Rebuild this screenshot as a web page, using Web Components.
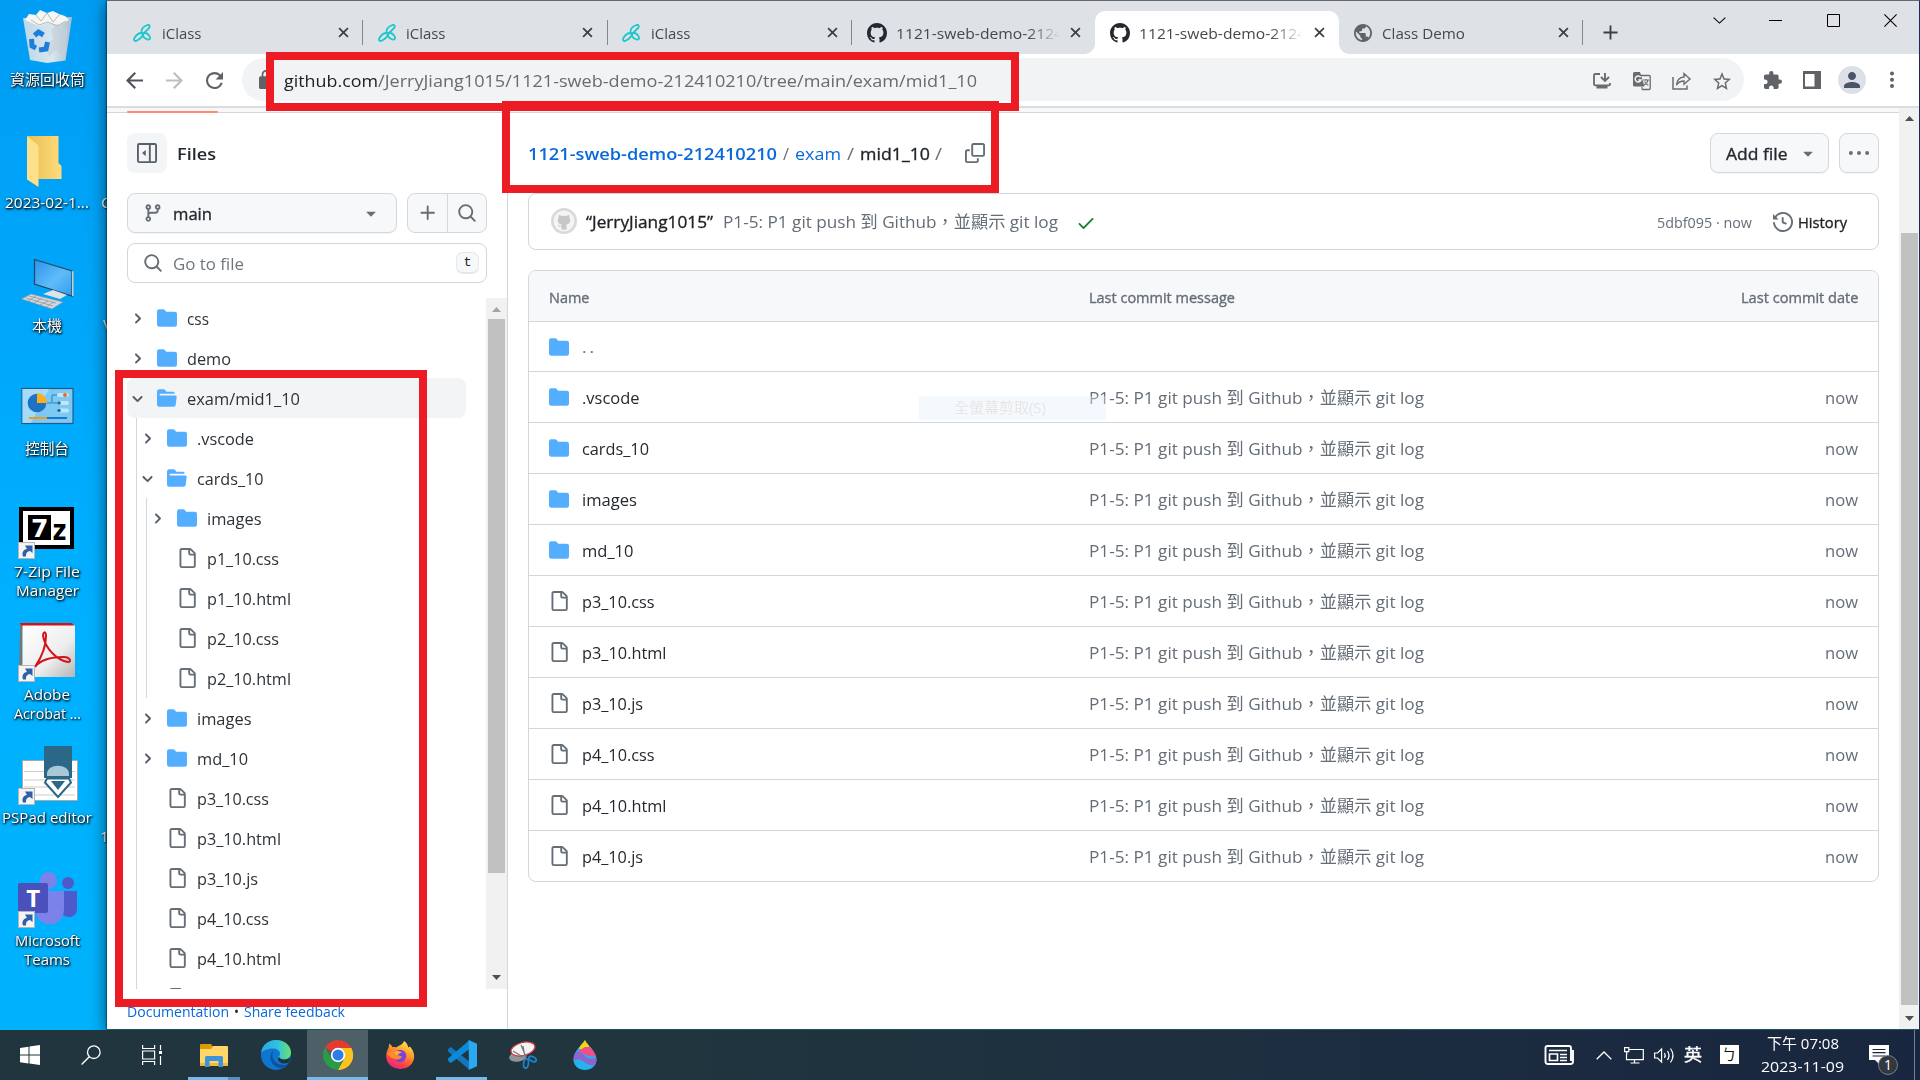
<!DOCTYPE html>
<html lang="zh-Hant">
<head>
<meta charset="utf-8">
<title>Desktop</title>
<style>
html,body{margin:0;padding:0}
body{width:1920px;height:1080px;overflow:hidden;font-family:"Open Sans","Noto Sans CJK TC",sans-serif;font-size:17px;color:#1f2328}
</style>
</head>
<body>
<desk-shell></desk-shell>
<script>
const def=(tag,render,after)=>customElements.define(tag,class extends HTMLElement{
  connectedCallback(){
    if(this.shadowRoot)return;
    const r=this.attachShadow({mode:'open'});
    r.innerHTML='<style>*{box-sizing:border-box}</style>'+render((n,d='')=>this.getAttribute(n)??d,this);
    if(after)after(this,r);
  }
});

const gh='M8 0c4.42 0 8 3.58 8 8a8.013 8.013 0 0 1-5.45 7.59c-.4.08-.55-.17-.55-.38 0-.27.01-1.13.01-2.2 0-.75-.25-1.23-.54-1.48 1.78-.2 3.65-.88 3.65-3.95 0-.88-.31-1.59-.82-2.15.08-.2.36-1.02-.08-2.12 0 0-.67-.22-2.2.82-.64-.18-1.32-.27-2-.27-.68 0-1.36.09-2 .27-1.53-1.03-2.2-.82-2.2-.82-.44 1.1-.16 1.92-.08 2.12-.51.56-.82 1.28-.82 2.15 0 3.06 1.86 3.75 3.64 3.95-.23.2-.44.55-.51 1.07-.46.21-1.61.55-2.33-.66-.15-.24-.6-.83-1.23-.82-.67.01-.27.38.01.53.34.19.73.9.82 1.13.16.45.68 1.31 2.69.94 0 .67.01 1.3.01 1.49 0 .21-.15.45-.55.38A7.995 7.995 0 0 1 0 8c0-4.42 3.58-8 8-8Z';
const p=d=>`<path d="${d}"/>`;
const st='fill="none" stroke="currentColor"';
const link=(x,y)=>`<g transform="translate(${x} ${y})"><rect x=".5" y=".5" width="16" height="16" fill="#f4f4f4" stroke="#b5b5b5"/><path d="M5 14.500c-1.500-4 .5-7 4-7.500l-2-3.500h7.500v7.500L12 9c-3.500.5-4 2.500-4 5.500z" fill="#2e5fa8"/></g>`;
/* name: [viewBox, markup] */
const ICONS={
 github:['0 0 16 16',p(gh)],
 folder:['0 0 16 16',p('M1.75 1A1.75 1.75 0 0 0 0 2.750v10.500C0 14.216.784 15 1.750 15h12.500A1.750 1.750 0 0 0 16 13.250v-8.500A1.750 1.750 0 0 0 14.250 3H7.500a.25.25 0 0 1-.2-.1l-.9-1.200C6.070 1.260 5.550 1 5 1H1.750Z')],
 folderopen:['0 0 16 16',p('M.513 1.513A1.75 1.75 0 0 1 1.75 1h3.500c.55 0 1.070.26 1.400.7l.9 1.200a.25.25 0 0 0 .2.1H13a1 1 0 0 1 1 1v.5H2.750a.75.75 0 0 0 0 1.500h11.978a1 1 0 0 1 .994 1.117L15 13.250A1.750 1.750 0 0 1 13.250 15H1.750A1.750 1.750 0 0 1 0 13.250V2.750c0-.464.184-.91.513-1.237Z')],
 file:['0 0 16 16',p('M2 1.75C2 .784 2.784 0 3.75 0h6.586c.464 0 .909.184 1.237.513l2.914 2.914c.329.328.513.773.513 1.237v9.586A1.75 1.75 0 0 1 13.25 16h-9.500A1.750 1.750 0 0 1 2 14.250Zm1.750-.25a.25.25 0 0 0-.25.25v12.500c0 .138.112.25.25.25h9.500a.25.25 0 0 0 .25-.25V6h-2.750A1.750 1.750 0 0 1 9 4.250V1.500Zm6.750.062V4.250c0 .138.112.25.25.25h2.688l-.011-.013-2.914-2.914-.013-.011Z')],
 branch:['0 0 16 16',p('M9.5 3.25a2.25 2.25 0 1 1 3 2.122V6A2.5 2.5 0 0 1 10 8.500H6a1 1 0 0 0-1 1v1.128a2.251 2.251 0 1 1-1.500 0V5.372a2.250 2.250 0 1 1 1.500 0v1.836A2.493 2.493 0 0 1 6 7h4a1 1 0 0 0 1-1v-.628A2.250 2.250 0 0 1 9.500 3.250Zm-6 0a.75.75 0 1 0 1.500 0 .75.75 0 0 0-1.500 0Zm8.250-.75a.75.75 0 1 0 0 1.500.75.75 0 0 0 0-1.500ZM4.250 12a.75.75 0 1 0 0 1.500.75.75 0 0 0 0-1.500Z')],
 caret:['0 0 16 16',p('m4.427 7.427 3.396 3.396a.25.25 0 0 0 .354 0l3.396-3.396A.25.25 0 0 0 11.396 7H4.604a.25.25 0 0 0-.177.427Z')],
 plus:['0 0 16 16',p('M7.75 2a.75.75 0 0 1 .75.75V7h4.250a.75.75 0 0 1 0 1.500H8.500v4.250a.75.75 0 0 1-1.500 0V8.500H2.750a.75.75 0 0 1 0-1.500H7V2.750A.75.75 0 0 1 7.750 2Z')],
 search:['0 0 16 16',p('M10.68 11.74a6 6 0 0 1-7.922-8.982 6 6 0 0 1 8.982 7.922l3.040 3.040a.749.749 0 0 1-.326 1.275.749.749 0 0 1-.734-.215ZM11.500 7a4.499 4.499 0 1 0-8.997 0A4.499 4.499 0 0 0 11.500 7Z')],
 right:['0 0 12 12',p('M4.7 10c-.2 0-.4-.1-.5-.2-.3-.3-.3-.8 0-1.100L6.900 6 4.200 3.300c-.3-.3-.3-.8 0-1.100.3-.3.8-.3 1.100 0l3.300 3.200c.3.3.3.8 0 1.100L5.300 9.700c-.2.2-.4.3-.6.3Z')],
 down:['0 0 12 12',p('M6 8.825c-.2 0-.4-.1-.5-.2l-3.300-3.300c-.3-.3-.3-.8 0-1.100.3-.3.8-.3 1.100 0l2.700 2.700 2.700-2.700c.3-.3.8-.3 1.100 0 .3.3.3.8 0 1.100l-3.200 3.200c-.2.2-.4.3-.6.3Z')],
 panel:['0 0 16 16',`<rect x=".75" y=".75" width="14.500" height="14.500" rx="1" ${st} stroke-width="1.500"/><path d="M10.250 1v14" ${st} stroke-width="1.500"/><path d="M7 5.500v5L4.300 8.200a.25.25 0 0 1 0-.4z"/>`],
 copy:['0 0 16 16',p('M0 6.75C0 5.784.784 5 1.75 5h1.500a.75.75 0 0 1 0 1.500h-1.500a.25.25 0 0 0-.25.25v7.500c0 .138.112.25.25.25h7.500a.25.25 0 0 0 .25-.25v-1.500a.75.75 0 0 1 1.500 0v1.500A1.750 1.750 0 0 1 9.250 16h-7.500A1.750 1.750 0 0 1 0 14.250Z')+p('M5 1.75C5 .784 5.784 0 6.75 0h7.500C15.216 0 16 .784 16 1.750v7.500A1.750 1.750 0 0 1 14.250 11h-7.500A1.750 1.750 0 0 1 5 9.250Zm1.750-.25a.25.25 0 0 0-.25.25v7.500c0 .138.112.25.25.25h7.500a.25.25 0 0 0 .25-.25v-7.500a.25.25 0 0 0-.25-.25Z')],
 check:['0 0 16 16',p('M13.78 4.22a.75.75 0 0 1 0 1.060l-7.250 7.250a.75.75 0 0 1-1.060 0L2.220 9.280a.751.751 0 0 1 .018-1.042.751.751 0 0 1 1.042-.018L6 10.940l6.720-6.720a.75.75 0 0 1 1.060 0Z')],
 history:['0 0 16 16',p('m.427 1.927 1.215 1.215a8.002 8.002 0 1 1-1.600 5.685.75.75 0 1 1 1.493-.154 6.500 6.500 0 1 0 1.180-4.458l1.358 1.358A.25.25 0 0 1 3.896 6H.25A.25.25 0 0 1 0 5.750V2.104a.25.25 0 0 1 .427-.177ZM7.750 4a.75.75 0 0 1 .75.75v2.992l2.028.812a.75.75 0 0 1-.557 1.392l-2.500-1A.751.751 0 0 1 7 8.250v-3.500A.75.75 0 0 1 7.750 4Z')],
 dots:['0 0 16 16','<circle cx="1.500" cy="8" r="1.550"/><circle cx="8" cy="8" r="1.550"/><circle cx="14.500" cy="8" r="1.550"/>'],
 vdots:['0 0 6 18','<circle cx="3" cy="2.500" r="2"/><circle cx="3" cy="8.700" r="2"/><circle cx="3" cy="15" r="2"/>'],
 back:['4 4 16 16',p('M20 11H7.830l5.590-5.590L12 4l-8 8 8 8 1.410-1.410L7.830 13H20v-2z')],
 fwd:['4 4 16 16',p('M4 13h12.170l-5.590 5.590L12 20l8-8-8-8-1.410 1.410L16.170 11H4z')],
 reload:['4 4 16 16',p('M17.65 6.35A7.958 7.958 0 0 0 12 4c-4.420 0-7.990 3.580-7.990 8s3.570 8 7.990 8c3.730 0 6.840-2.550 7.730-6h-2.080A5.990 5.990 0 0 1 12 18c-3.310 0-6-2.690-6-6s2.690-6 6-6c1.660 0 3.140.69 4.220 1.780L13 11h7V4l-2.350 2.350z')],
 lock:['4 1 16 21',p('M18 8h-1V6c0-2.760-2.240-5-5-5S7 3.240 7 6v2H6c-1.100 0-2 .9-2 2v10c0 1.100.9 2 2 2h12c1.100 0 2-.9 2-2V10c0-1.100-.9-2-2-2zm-3 0H9V6c0-1.710 1.290-3.100 3-3.100 1.710 0 3.100 1.390 3.100 3.100v2z')],
 globe:['2 2 20 20',p('M12 2C6.48 2 2 6.48 2 12s4.480 10 10 10 10-4.480 10-10S17.520 2 12 2zm-1 17.930c-3.950-.49-7-3.850-7-7.930 0-.62.08-1.210.21-1.790L9 15v1c0 1.100.9 2 2 2v1.930zm6.900-2.540c-.26-.81-1-1.390-1.900-1.390h-1v-3c0-.55-.45-1-1-1H8v-2h2c.55 0 1-.45 1-1V7h2c1.100 0 2-.9 2-2v-.41c2.930 1.190 5 4.060 5 7.410 0 2.080-.8 3.970-2.100 5.390z')],
 star:['2 2 20 19',p('M22 9.24l-7.190-.62L12 2 9.190 8.630 2 9.240l5.460 4.730L5.820 21 12 17.270 18.180 21l-1.630-7.030L22 9.240zM12 15.400l-3.760 2.270 1-4.280-3.320-2.880 4.380-.38L12 6.100l1.710 4.040 4.380.38-3.320 2.880 1 4.280L12 15.400z')],
 puzzle:['2 1 21 21',p('M20.500 11H19V7c0-1.100-.9-2-2-2h-4V3.500a2.500 2.500 0 0 0-5 0V5H4c-1.100 0-1.990.9-1.990 2v3.800H3.500c1.490 0 2.700 1.210 2.700 2.700s-1.210 2.700-2.700 2.700H2V20c0 1.100.9 2 2 2h3.800v-1.500c0-1.490 1.210-2.700 2.700-2.700s2.700 1.210 2.700 2.700V22H17c1.100 0 2-.9 2-2v-4h1.500a2.500 2.500 0 0 0 0-5z')],
 person:['4 4 16 16',p('M12 12c2.210 0 4-1.790 4-4s-1.790-4-4-4-4 1.790-4 4 1.790 4 4 4zm0 2c-2.670 0-8 1.340-8 4v2h16v-2c0-2.660-5.330-4-8-4z')],
 side:['0 0 18 18','<path fill-rule="evenodd" d="M0 0h18v18H0zM2 3v12.500h9.500V3z"/>'],
 install:['0 0 18 18',`<path d="M7 2H2.200Q1 2 1 3.200V12q0 1.300 1.200 1.300H16q1 0 1-1.300V11" ${st} stroke-width="1.800"/><path d="M3.500 14h11v2.500h-11z"/><path d="M12 1v7.500M8 5l4 4 4-4" ${st} stroke-width="1.900"/>`],
 translate:['0 0 18 18',`<path d="M7 3.500h9.200q1 0 1 1v12q0 1-1 1H9" ${st} stroke-width="1.300"/><path d="M1.500 0H7l4.500 14.500h-10Q0 14.500 0 13V1.500Q0 0 1.500 0z"/><path d="M7.600 5.200A3 3 0 1 0 8 8H5.300" fill="none" stroke="#f1f3f4" stroke-width="1.500"/><path d="M10 8h6M13 7v1.200M15 8c-.5 2.500-2 4-4 5M11.500 9.500c.7 1.700 2 3 3.800 3.800M9 17.500v-2.500" ${st} stroke-width="1.100"/>`],
 share:['0 0 19 18',`<path d="M1 5v12h14v-3.500" ${st} stroke-width="1.500"/><path d="M4.500 13c.5-5 3-7.700 7.500-8V1.500L18 7l-6 5.300V9c-3.500 0-5.700 1.200-7.500 4z" ${st} stroke-width="1.400"/>`],
 x:['0 0 12 12',`<path d="M1.200 1.200l9.600 9.600M10.800 1.200l-9.600 9.600" ${st} stroke-width="1.900"/>`],
 newtab:['0 0 16 16',`<path d="M8 .5v15M.5 8h15" ${st} stroke-width="2"/>`],
 iclass:['0 0 18 18','<g fill="none" stroke="#1cc8cb" stroke-width="1.800"><path d="M8.500 8.800C8 5 10 2.500 14.500 1c2.500-.5 2.700 1.500 1.500 3.200L10 10z"/><path d="M8.800 9c-3 0-6 2.500-7.600 5.500-.8 1.800.6 3 2.300 2.200C7 15 9.500 13 10 10z"/><path d="M10 9.300c3-1 5.500.5 7 4 .6 1.600-.7 2.700-2.300 2.200C11.500 14.500 9.500 12.500 10 9.300z"/></g>'],
 wchev:['0 0 14 8',`<path d="M.7.7L7 7 13.300.7" ${st} stroke-width="1.100"/>`],
 wmin:['0 0 13 13',`<path d="M0 6.500h13" ${st}/>`],
 wmax:['0 0 13 13',`<path d="M.5.5h12v12H.5z" ${st}/>`],
 wclose:['0 0 13 13',`<path d="M.4.4l12.200 12.200M12.600.4L.4 12.600" ${st} stroke-width="1.100"/>`],
 tri:['0 0 9 5','<path d="M0 5L4.500 0 9 5z"/>'],
 trid:['0 0 9 5','<path d="M0 0l4.500 5L9 0z"/>'],
 avatar:['0 0 26 26',`<circle cx="13" cy="13" r="13" fill="#d9d9d9"/><circle cx="13" cy="13" r="10.500" fill="#f4f4f4"/><path transform="translate(3.600 4.200) scale(1.180)" fill="#c7c7c7" d="M8 14.800c-1 0-2-.2-2.200-.4v-2c-2 .4-2.400-1-3-1.500-.5-.4.500-.6 1.200.2.500.8 1.200.9 1.800.6.1-.5.3-.8.6-1C4 10.300 2.700 9 2.700 6.800c0-.9.3-1.600.8-2.200-.2-.7-.1-1.500.1-2.200.8 0 1.500.4 2.200.9a8 8 0 0 1 4.400 0c.7-.5 1.400-.9 2.200-.9.2.7.3 1.500.1 2.200.5.600.8 1.300.8 2.200 0 2.200-1.300 3.500-3.700 3.900.4.4.6.9.6 1.500v2.200c-.5.3-1.200.4-2.200.4z"/>`],
 start:['0 0 20 20','<path d="M0 2.900l8.500-1.200v7.900H0zM9.500 1.500L20 0v9.600H9.500zM0 10.600h8.500v7.800L0 17.200zM9.500 10.600H20V20L9.500 18.600z"/>'],
 wsearch:['0 0 20 20',`<circle cx="12.800" cy="7.200" r="6.300" ${st} stroke-width="1.300"/><path d="M8.300 11.700L.6 19.400" ${st} stroke-width="1.400"/>`],
 taskview:['0 0 20 20',`<path d="M.6 0v3.500h12V0M.6 20v-3.500h12V20M.6 6h12v8H.6zM18.500 0v5M18.500 11v9" ${st} stroke-width="1.200"/><path d="M17 6h3v3h-3z"/>`],
 explorer:['0 0 28 24','<path d="M0 2Q0 1 1 1h10l2 3v4H0z" fill="#dd9a06"/><path d="M13 3h14q1 0 1 1v19H0V6h11z" fill="#ffd667"/><path d="M0 20h28v3H0z" fill="#f0b938"/><path d="M5 24V14.500Q5 13 6.500 13h15q1.500 0 1.500 1.500V24h-4.500v-6h-9v6z" fill="#3d92dc"/>'],
 edge:['0 0 30 30','<defs><linearGradient id="a" x1="0" x2="1"><stop offset="0" stop-color="#2aa6e8"/><stop offset=".55" stop-color="#32c2dc"/><stop offset="1" stop-color="#6be36b"/></linearGradient></defs><circle cx="15" cy="15" r="15" fill="#0f76cf"/><path d="M0 13C1 5 7.500 0 15 0c9 0 15 6 15 12.500 0 4.500-3.500 7-7.500 7-3 0-5-1-5-2 0-1 1.500-1.500 1.500-4C19 10.500 15.500 8.500 11.500 8.500 6 8.500 1.500 11 0 13z" fill="url(#a)"/><path d="M13 10c-5 3.500-5 13 2.500 17 4.500 2.300 9 1 12-3C23 26 13.500 25 11.500 17 11 14 11.500 12 13 10z" fill="#114fa3"/><path d="M18.500 17c0 1.500 2 2.600 5 2.600 2.500 0 4.500-.8 6-2.500-.3 2-.8 3.800-1.800 5.400-4 2.500-10 .5-11-3.500z" fill="#20333d"/>'],
 chrome:['0 0 30 30','<path d="M15 15L2 7.500A15 15 0 0 1 28 7.500L28 8H15z" fill="#e33b2e"/><path d="M15 15h13.200L28 7.500A15 15 0 0 1 15 30L21.500 18.500z" fill="#fcc31e"/><path d="M2 7.500L8.500 18.700 15 22.500 19.500 21 14.500 30A15 15 0 0 1 2 7.500z" fill="#2a9c47"/><path d="M15 8h13.100A15 15 0 0 1 30 15q0 8-6 12l-8.500 3 6-11.200z" fill="#fcc31e"/><circle cx="15" cy="15" r="7.200" fill="#fff"/><circle cx="15" cy="15" r="5.500" fill="#2b7de9"/>'],
 firefox:['0 0 28 28','<defs><linearGradient id="a" x1=".8" y1="0" x2=".3" y2="1"><stop offset="0" stop-color="#fff04a"/><stop offset=".4" stop-color="#ff9a2a"/><stop offset=".75" stop-color="#ff4340"/><stop offset="1" stop-color="#e52195"/></linearGradient></defs><path d="M18 0c3 2 4 4.500 4.200 6.500L24 5.500C29 11 29.500 18 25.500 23 20 29.500 8.500 29.500 3 23-.5 19-.8 12 2.500 7l.8-4.500C5 4 6 5 6.500 6.300 8 6 9 6 10 6.500L12.500 5c2-.8 4.500-2 5.500-5z" fill="url(#a)"/><circle cx="14" cy="15" r="6.200" fill="#7d42d8"/><path d="M8 11c3-1.500 5-1 8 .5-3 .5-4 1.500-4.500 3.500C10 14.500 8 13 8 11z" fill="#ffb02e"/><path d="M1 13c2-3 5-4 7-2 0 2.500 2 4 5 3.500l3 1c-1 2.500-5 4-8 2-1 0-4-1-7-4.500z" fill="#ff8b2c"/>'],
 vscode:['0 0 30 30','<path d="M1.500 8.500L3.800 7 23 22v7.500L21.500 29 .7 11.200z" fill="#1377bd"/><path d="M.7 18.800l1 2.900L4 23 23 8.500V.5L21.500 1 .7 18.800z" fill="#0a8ad8"/><path d="M21.500 0L30 3.800v22.400L21.500 30 22 28z" fill="#2aa9f2"/>'],
 snip:['0 0 28 28','<ellipse cx="9" cy="15.500" rx="9" ry="5" fill="#8f9599" transform="rotate(-12 9 15.500)"/><ellipse cx="14" cy="8" rx="12.300" ry="6.500" transform="rotate(-15 14 8)" fill="#f4f4f4" stroke="#d33a3a" stroke-width="1.200"/><path d="M12 4l5 12M4 10l10 6M16 16L14 5" stroke="#777" stroke-width="1.200" fill="none"/><g fill="none" stroke="#1c86d1" stroke-width="1.700"><ellipse cx="17" cy="22.500" rx="2.400" ry="4.600" transform="rotate(8 17 22.500)"/><ellipse cx="23.500" cy="18" rx="4" ry="2.200" transform="rotate(25 23.500 18)"/></g>'],
 drop:['0 0 24 30','<defs><clipPath id="c"><path d="M12 0c1 4 11.500 11 11.500 19.500C23.500 26 18 30 12 30S.5 26 .5 19.500C.5 11 9 5 12 0z"/></clipPath></defs><g clip-path="url(#c)"><path d="M0 0h24v30H0z" fill="#23b4ee"/><path d="M8 0h8v9H6z" fill="#f8d210"/><path d="M24 7L12 7 2 13c7-4 10 6 22 3z" fill="#ee4f86"/><path d="M0 14c5-4 8-2 12 2s8 3 12 1v8c-5 1-9 0-13-3-4-3-7-3-11-1z" fill="#8f63cf"/></g>'],
 news:['0 0 30 20',`<path d="M1.500 3Q1.500 1 3.500 1H25q2 0 2 2v3h2v10.500q0 2.500-2.500 2.500H4q-2.500 0-2.500-2.500zM27 6v10" ${st} stroke-width="1.900"/><path d="M5 5.500h18M5.500 9h8v6.500h-8zM16 9.500h7M16 12.500h7M16 15.500h7" ${st} stroke-width="1.700"/>`],
 tchev:['0 0 16 9',`<path d="M.7 8.300L8 1l7.300 7.300" ${st} stroke-width="1.300"/>`],
 net:['0 0 20 17',`<path d="M5 2.500h14.300v10.200H2.500V7.500M10.500 13v3M6.500 16h9M.6.6h4.200v4H.6zM2.700 4.500v3.500" ${st} stroke-width="1.200"/>`],
 vol:['0 0 21 17',`<path d="M.6 6h3l4-4v13l-4-4h-3zM10.500 6q1.500 2.500 0 5M13.500 4q3 4.500 0 9M16.500 1.500q5 7 0 14" ${st} stroke-width="1.200"/>`],
 notif:['0 0 20 20','<path d="M0 0h20v15H11l-1 4-4-4H0z"/><path d="M3.500 4.500h13M3.500 7.700h13M3.500 11h13" stroke="#19273f" stroke-width="1.200"/>'],
 bin:['0 0 56 56','<defs><linearGradient id="a" x1="0" x2="1"><stop offset="0" stop-color="#cfdbe6"/><stop offset=".6" stop-color="#e9edf0"/><stop offset="1" stop-color="#b6c0ca"/></linearGradient></defs><path d="M4 10l49-1-6.500 43.500L28 55l-17-3z" fill="url(#a)" opacity=".92"/><path d="M6 12l4-6 7 1 4-5 7 3 6-2 6 3 6 2 4 4-9 5-12-2-9 3z" fill="#f6f6f4"/><path d="M17 7l5 6 6-8 6 9 7-8M12 12l8 5 9-3 9 4 9-5" stroke="#b9b9b6" fill="none"/><path d="M32 22l6-6 5 8 6-5-3 32-9-9-7 6-4-10 8-7z" fill="#c6cdd5" opacity=".6"/><g fill="none" stroke="#1d7fd9" stroke-width="5"><path d="M15.500 27.500l4-3.500 5 3"/><path d="M12.500 31l.5 7 4 2"/><path d="M20 42l7-1 1.500-7"/></g>'],
 dfolder:['0 0 56 56','<defs><linearGradient id="a" x1="0" x2="1"><stop offset="0" stop-color="#e9be55"/><stop offset="1" stop-color="#ffdc7c"/></linearGradient></defs><path d="M8.500 5h31v27l3 3v13H18z" fill="url(#a)"/><path d="M8 5l11.500 9.500V56L8 48.500z" fill="#ffe08a"/>'],
 pc:['0 0 56 56','<defs><linearGradient id="a" x2="1" y2="1"><stop offset="0" stop-color="#2b93ea"/><stop offset=".55" stop-color="#5fbcf9"/><stop offset="1" stop-color="#2f9df2"/></linearGradient></defs><path d="M15.500 5.500L53 17v25L15.500 30z" fill="url(#a)" stroke="#274a66" stroke-width="1.300"/><path d="M53 17l1.500.5V42L53 42z" fill="#ccc"/><path d="M24 40l10-4 14 5-7 4z" fill="#dfe3e6"/><path d="M2.500 45L12 40l32 8-11 7z" fill="#d2d6da" stroke="#8b9298" stroke-width=".6"/><path d="M7 44l27 8M10 42l27 7M9 47l8-5M15 49l8-5M21 51l8-4M27 53l8-5" stroke="#8b9298" stroke-width=".7"/>'],
 cpanel:['0 0 56 56','<rect x="3" y="11.500" width="51" height="35" fill="#7cc9f3" stroke="#245a8a" stroke-width="1.200"/><path d="M3.500 12H30L12 46H3.500z" fill="#a3dbf8"/><circle cx="18" cy="26" r="9.300" fill="#1d72c4"/><path d="M18 26V16a10 10 0 0 1 10 10z" fill="#fcae1c"/><path d="M28 26h5v-8h5M34 26h5" stroke="#2682bd" fill="none"/><g fill="#bfe6fa"><rect x="38" y="16" width="12" height="4" rx="2"/><rect x="38" y="24" width="12" height="4" rx="2"/><rect x="38" y="31.500" width="12" height="4" rx="2"/></g><circle cx="46" cy="18" r="2" fill="#f26b1d"/><circle cx="40" cy="26" r="1.800" fill="#1c6dac"/><circle cx="40" cy="33.500" r="1.800" fill="#1c6dac"/><path d="M10 41h18" stroke="#f19a1c" stroke-width="2"/><path d="M28 41h20" stroke="#1c77c8" stroke-width="2"/>'],
 zip:['0 0 56 56','<rect x="2" y="9" width="51" height="38" fill="#fff" stroke="#000" stroke-width="4"/><path d="M9 15h23v25H9z" fill="#000"/><g font-family="DejaVu Sans" font-weight="700" style="text-shadow:none"><text x="12" y="37" font-size="25" fill="#fff">7</text><text x="33.500" y="40" font-size="28" textLength="14" lengthAdjust="spacingAndGlyphs" fill="#000">z</text></g>'+link(-1,42)],
 acrobat:['0 0 56 56','<defs><linearGradient id="a" x2="1" y2="1"><stop offset="0" stop-color="#fff"/><stop offset=".6" stop-color="#eee"/><stop offset="1" stop-color="#b5b5b5"/></linearGradient></defs><path d="M1 0h52l2 3-3 4H3z" fill="#d31217"/><path d="M1 1l2.500 2v50L0 50z" fill="#777"/><path d="M3.500 2.500H56V54H3.500z" fill="url(#a)"/><path d="M16 44c6-9 11-21 11-31 0-6-4-4-2.500 2C27 25 37 37 49 39c4 0 2-5-4-5-12 0-23 2-29 10z" fill="none" stroke="#d41317" stroke-width="2"/>'+link(-1,42)],
 pspad:['0 0 56 56','<path d="M3.500 14.500h55v40h-55z" fill="#fff" stroke="#aaa"/><path d="M5 25.500h51M5 34h51M5 41h51M5 49h51" stroke="#ccc"/><path d="M25 0h28v32H25z" fill="#2b6888"/><path d="M28 30v-2c0-11 22-11 22 0v2z" fill="#a9c8d6"/><path d="M28 32.500h22l2 4L39 51 26 36.500z" fill="#fff" stroke="#2b6888" stroke-width="2"/><path d="M32 35h14l-7 9z" fill="#2b6888"/>'+link(-1,42)],
 teams:['0 0 56 56','<circle cx="49" cy="14" r="6" fill="#5059c9"/><path d="M45 22h13v18c0 9-12 11-16 3z" fill="#5059c9"/><circle cx="29.500" cy="11.500" r="8.500" fill="#7b83eb"/><path d="M17 22h28v18c0 20-28 20-28 2z" fill="#7b83eb"/><rect x="-1" y="14" width="30" height="30" rx="2" fill="#4a51bd"/><text x="7.300" y="38" font-family="Open Sans" font-weight="700" font-size="24" fill="#fff" style="text-shadow:none">T</text>'+link(-1,42)]
};
def('ui-icon',(a)=>{const [vb,m]=ICONS[a('name')];const w=a('w','20'),h=a('h',w);
 return `<style>:host{display:block;flex:none;width:${w}px;height:${h}px}svg{display:block;width:100%;height:100%;overflow:visible}</style><svg viewBox="${vb}" fill="currentColor" preserveAspectRatio="none">${m}</svg>`});

/* a run of text laid out to a given advance width */
def('fit-text',a=>`<style>:host{display:inline-block;flex:none;white-space:nowrap;width:${a('w')}px}span{display:inline-block;transform-origin:0 50%}</style><span><slot></slot></span>`,
 (h,r)=>{const s=r.querySelector('span');const n=s.getBoundingClientRect().width;if(n)s.style.transform=`scaleX(${(+h.getAttribute('w')/n).toFixed(4)})`});
const T=(w,s)=>`<fit-text w="${w}">${s}</fit-text>`;
const I=(n,w,h=w,c='',cls='')=>`<ui-icon class="${cls}" name="${n}" w="${w}" h="${h}"${c?` style="color:${c}"`:''}></ui-icon>`;
const MED='-webkit-text-stroke:.35px currentColor;';

def('desk-icon',a=>`<style>:host{display:flex;flex-direction:column;align-items:center;height:123px;padding-top:8px;color:#fff;font-size:14.800px;line-height:19px;text-shadow:1px 1px 2px #000,0 1px 3px rgba(0,0,0,.8)}
 .l{display:flex;flex-direction:column;align-items:center;padding-top:6px;margin-top:0}</style>${I(a('icon'),56)}<div class="l"><slot></slot></div>`);

def('chrome-tab',a=>`<style>:host{display:flex;align-items:center;height:43px;padding:0 14.500px 0 14.500px;flex:none;width:${a('w')}px;position:relative;font-size:14.600px;color:#45484c}
 :host([active]){background:#fff;border-radius:10px 10px 0 0}
 :host([active])::before,:host([active])::after{content:"";position:absolute;bottom:0;width:10px;height:10px}
 :host([active])::before{left:-10px;background:radial-gradient(circle at 0 0,transparent 9.500px,#fff 10px)}
 :host([active])::after{right:-10px;background:radial-gradient(circle at 100% 0,transparent 9.500px,#fff 10px)}
 .t{flex:1;overflow:hidden;white-space:nowrap;margin:1px 11px 0 ${a('gap','10.5')}px;line-height:24px}
 .f{-webkit-mask:linear-gradient(90deg,#000 132px,transparent 164px)}
 .s{position:absolute;right:0;top:9px;width:1px;height:25px;background:#84888c}</style>
 ${I(a('icon'),a('iw','18'),a('iw','18'),a('ic','#24292f'))}<div class="t ${a('fade')?'f':''}"><slot></slot></div>${I('x',11,11,'#3c4043')}${a('sep')?'<i class="s"></i>':''}`);

def('tab-strip',()=>`<style>:host{display:flex;height:53px;background:#dee1e6;padding:10px 0 0 11.500px}
 .n{display:flex;align-items:center;padding:0 0 0 20px;height:43px;flex:1}
 .w{display:flex;gap:0;margin-top:-10px;height:38px;align-items:center}.w ui-icon{color:#000}</style>
 <chrome-tab w="244.500" icon="iclass" sep="1">${T(39.5,'iClass')}</chrome-tab>
 <chrome-tab w="244.500" icon="iclass" sep="1">${T(39.5,'iClass')}</chrome-tab>
 <chrome-tab w="244.500" icon="iclass" sep="1">${T(39.5,'iClass')}</chrome-tab>
 <chrome-tab w="243" icon="github" iw="20" gap="9" fade="1">${T(176,'1121-sweb-demo-21241')}</chrome-tab>
 <chrome-tab w="244" active icon="github" iw="20" gap="9.500" fade="1">${T(176,'1121-sweb-demo-21241')}</chrome-tab>
 <chrome-tab w="244" icon="globe" ic="#5f6368" sep="1">${T(83,'Class Demo')}</chrome-tab>
 <div class="n">${I('newtab',15,15,'#3c4043')}</div>
 <div class="w" style="padding-right:22px">${I('wchev',13,7)}<div style="width:43px"></div>${I('wmin',13)}<div style="width:45px"></div>${I('wmax',13)}<div style="width:44px"></div>${I('wclose',13)}</div>`);

def('chrome-toolbar',()=>`<style>:host{display:flex;align-items:center;height:54px;background:#fff;border-bottom:2px solid #dadce0;padding:0 24px 0 19px;color:#5f6368}
 .o{display:flex;align-items:center;width:1503px;height:43px;border-radius:22px;background:#f1f3f4;padding:0 13px 0 17px;margin:-1px 20px 0 18.500px;font-size:17px;color:#686c70}
 .o b{font-weight:400;color:#202124}.u{flex:1;padding-left:11.500px;display:flex;margin-top:1px}.r{display:flex;gap:21.700px;align-items:center;margin-top:2px}
 .av{width:28px;height:28px;border-radius:50%;background:#dde1e7;display:grid;place-items:center;color:#4a5568;margin:0 23px 0 17px}</style>
 ${I('back',17,17,'#50545a')}<div style="width:23px"></div>${I('fwd',17,17,'#bcbfc2')}<div style="width:23px"></div>${I('reload',17,17)}
 <div class="o">${I('lock',14,19,'#5f6368')}<div class="u">${T(94,'<b>github.com</b>')}${T(599,'/JerryJiang1015/1121-sweb-demo-212410210/tree/main/exam/mid1_10')}</div>
 <div class="r">${I('install',18)}${I('translate',18)}${I('share',19,18)}${I('star',18)}</div></div>
 ${I('puzzle',18)}<div style="width:21px"></div>${I('side',18)}<div class="av">${I('person',16)}</div>${I('vdots',6,18)}`);

def('scroll-rail',a=>`<style>:host{display:flex;flex-direction:column;align-items:center;background:#f1f1f1;flex:none;color:#505050;padding:${a('pad','9')}px 0 ${a('pad','9')}px}
 i{display:block;width:17px;background:#c1c1c1;margin-top:${a('gap')}px;height:${a('thumb')}px}</style>${I('tri',9,5,a('tc','#505050'))}<i></i><div style="flex:1"></div>${I('trid',9,5)}`);

def('tree-item',a=>{const k=a('kind'),l=+a('level','0');
 return `<style>:host{display:flex;align-items:center;height:40px;width:339px;flex:none;border-radius:8px;padding-left:${3+l*10}px;font-size:17px;color:#2c3238;line-height:24px;position:relative}
 :host([on]){background:#f3f4f6}
 .c{width:27px;color:#57606a}.n{margin-left:9.800px;padding-top:1px}
 .g{position:absolute;top:0;bottom:0;width:1px;background:#d0d7de}</style>
 ${l>0?'<i class="g" style="left:9px"></i>':''}${l>1?'<i class="g" style="left:19px"></i>':''}
 <div class="c">${k==='file'?'':I(k==='open'?'down':'right',15)}</div>
 ${k==='file'?I('file',20,20,'#656d76'):I(k==='open'?'folderopen':'folder',20,20,'#54aeff')}
 ${a('label')?`<div class="n">${T(a('w'),a('label'))}</div>`:''}`});

const tree=[['dir',0,'css',22],['dir',0,'demo',44],['open',0,'exam/mid1_10',113],['dir',1,'.vscode',57],['open',1,'cards_10',66.5],['dir',2,'images',54.5],['file',2,'p1_10.css',72],['file',2,'p1_10.html',84],['file',2,'p2_10.css',72],['file',2,'p2_10.html',84],['dir',1,'images',54.5],['dir',1,'md_10',51],['file',1,'p3_10.css',72],['file',1,'p3_10.html',84],['file',1,'p3_10.js',61],['file',1,'p4_10.css',72],['file',1,'p4_10.html',84],['file',1,'',61]];

def('repo-sidebar',()=>`<style>:host{display:flex;flex-direction:column;width:401px;border-right:1px solid #d0d7de;padding:20px 0 0 20px;color:#24292f;flex:none}
 .h,.b,.s{display:flex;align-items:center;height:40px;flex:none}
 .p{width:40px;height:40px;border-radius:8px;background:#f4f5f7;display:grid;place-items:center;color:#57606a;margin-right:10px}
 .b{margin-top:20px;gap:10px}
 .m{display:flex;align-items:center;width:270px;height:40px;border:1px solid #d4d8dd;border-radius:8px;background:#f6f8fa;padding:0 15px 0 15px;color:#656d76;box-shadow:0 1px 0 rgba(31,35,40,.04)}
 .g{display:grid;grid-template-columns:39px 39px;height:40px;border:1px solid #d4d8dd;border-radius:8px;background:#f6f8fa;width:80px;color:#656d76}
 .g>*{display:grid;place-items:center}.g div+div{border-left:1px solid #d4d8dd}
 .s{margin-top:10px;width:360px;border:1px solid #d0d7de;border-radius:8px;padding:0 7px 0 15px;color:#6e7781}
 .k{width:23px;height:22px;border:1px solid #e4e8ec;border-bottom-width:2px;border-radius:7px;background:#f6f8fa;display:grid;place-items:center;font:13.500px/18px "Liberation Mono",monospace;color:#1f2328;padding-top:1px}
 .t{margin-top:15px;display:flex;height:691px;flex:none;overflow:hidden;justify-content:space-between}
 .l{display:flex;flex-direction:column}
 .f{margin-top:10px;font-size:14.600px;line-height:24px;display:flex;color:#0969da;gap:5px}</style>
 <div class="h"><div class="p">${I('panel',20)}</div><b style="font-weight:600;padding-top:1px">${T(39,'Files')}</b></div>
 <div class="b"><div class="m">${I('branch',20)}<div style="padding:1px 0 0 10px;color:#24292f;flex:1;${MED}">${T(39,'main')}</div>${I('caret',20)}</div>
 <div class="g"><div>${I('plus',20)}</div><div>${I('search',20)}</div></div></div>
 <div class="s">${I('search',20,20,'#656d76')}<div style="padding:1px 0 0 10px;flex:1">${T(71,'Go to file')}</div><div class="k">t</div></div>
 <div class="t"><div class="l">${tree.map(([k,l,n,w],i)=>`<tree-item kind="${k}" level="${l}" label="${n}" w="${w}"${i===2?' on':''}></tree-item>`).join('')}</div>
 <scroll-rail style="width:21px" gap="7" thumb="554" tc="#a3a3a3"></scroll-rail></div>
 <div class="f">${T(102,'Documentation')}<span style="color:#24292f">${T(5,'•')}</span>${T(101,'Share feedback')}</div>`);

def('file-row',a=>`<style>:host{display:flex;align-items:center;height:51px;border-top:1px solid #d0d7de;padding:0 20px 0 20px;color:#656d76;line-height:24px}
 :host([first]){height:50px}
 .n{width:507px;margin-left:13px;color:#24292f;padding-top:1px}.m{flex:1;padding-top:1px;white-space:nowrap}.d{padding-top:1px}</style>
 ${a('kind')==='file'?I('file',20,20,'#656d76'):I('folder',20,20,'#54aeff')}
 <div class="n">${a('label')==='..'?'<span style="letter-spacing:3px;color:#656d76">..</span>':T(a('w'),a('label'))}</div>${a('label')==='..'?'':`<div class="m">${T(335,'P1-5: P1 git push 到 Github，並顯示 git log')}</div><div class="d">${T(33,'now')}</div>`}`);

const rows=[['dir','..',10],['dir','.vscode',57.5],['dir','cards_10',67],['dir','images',55],['dir','md_10',51.5],['file','p3_10.css',72.5],['file','p3_10.html',84.5],['file','p3_10.js',61],['file','p4_10.css',72.5],['file','p4_10.html',84.5],['file','p4_10.js',61]];

def('file-table',()=>`<style>:host{display:block;border:1px solid #d0d7de;border-radius:8px;overflow:hidden;height:612px;width:1351px;flex:none}
 .h{display:flex;align-items:center;height:50px;background:#f6f8fa;font-size:14.600px;${MED}color:#656d76;padding:1px 20px 0;line-height:24px}</style>
 <div class="h"><div style="width:540px">${T(40.5,'Name')}</div><div style="flex:1">${T(146,'Last commit message')}</div>${T(117.5,'Last commit date')}</div>
 ${rows.map(([k,n,w],i)=>`<file-row kind="${k}" label="${n}" w="${w}"${i?'':' first'}></file-row>`).join('')}`);

def('commit-bar',()=>`<style>:host{display:flex;align-items:center;border:1px solid #d0d7de;border-radius:8px;height:57px;width:1351px;flex:none;padding:0 31px 0 22px;color:#656d76;line-height:24px}
 div{padding-top:1px}</style>
 <div style="margin-top:-3px">${I('avatar',26)}</div><div style="margin-left:9px;${MED}color:#1f2328">${T(127,'“JerryJiang1015”')}</div>
 <div style="margin-left:10px">${T(335,'P1-5: P1 git push 到 Github，並顯示 git log')}</div>
 <div style="margin-left:18px;flex:1;padding-top:3px">${I('check',20,20,'#1a7f37')}</div>
 <div style="font-size:14.600px">${T(95,'5dbf095 · now')}</div><div style="margin-left:21px">${I('history',20)}</div>
 <div style="margin-left:5px;font-size:14.600px;${MED}color:#1f2328">${T(49,'History')}</div>`);

def('repo-main',()=>`<style>:host{display:flex;flex-direction:column;flex:1;padding:20px 0 0 20px;line-height:24px}
 .h{display:flex;align-items:center;height:40px;margin-bottom:20px;width:1351px;color:#656d76}
 .h>span{padding-top:1px}
 .bt{display:flex;align-items:center;justify-content:center;height:40px;border:1px solid #d4d8dd;border-radius:8px;background:#f6f8fa;box-shadow:0 1px 0 rgba(31,35,40,.04)}
 commit-bar{margin-bottom:20px}</style>
 <div class="h"><span style="font-weight:600;color:#0969da">${T(249,'1121-sweb-demo-212410210')}</span><span style="margin-left:6px">${T(6,'/')}</span>
 <span style="margin-left:6px;color:#0969da">${T(46,'exam')}</span><span style="margin-left:6px">${T(7,'/')}</span>
 <span style="margin-left:6px;${MED}color:#1f2328">${T(70,'mid1_10')}</span><span style="margin-left:5px">${T(7,'/')}</span>
 <div style="margin-left:23px;flex:1">${I('copy',20)}</div>
 <div class="bt" style="width:119px;color:#24292f;padding:0 0 0 5px"><span style="padding-top:1px;${MED}">${T(61.5,'Add file')}</span><div style="margin-left:11px;color:#656d76">${I('caret',20)}</div></div>
 <div class="bt" style="width:40px;margin-left:10px">${I('dots',20)}</div></div>
 <commit-bar></commit-bar><file-table></file-table>`);

def('browser-window',()=>`<style>:host{display:flex;flex-direction:column;width:1813px;height:1030px;background:#fff;border-top:1px solid #666a6e;border-right:1px solid #1d2a5c;border-bottom:1px solid #1d5662;box-shadow:0 2px 16px rgba(0,0,0,.6),0 0 2px #000}
 .p{display:flex;height:921px}.c{flex:1;display:flex;flex-direction:column}
 .u{height:5px;flex:none;background:#f6f8fa;border-bottom:1px solid #d0d7de;padding-left:20px;display:flex;align-items:flex-end}
 .u i{width:91px;height:2px;background:#fd8c73;margin-bottom:-1px;border-radius:2px}
 .b{display:flex;flex:1}</style>
 <tab-strip></tab-strip><chrome-toolbar></chrome-toolbar>
 <div class="p"><div class="c"><div class="u"><i></i></div><div class="b"><repo-sidebar></repo-sidebar><repo-main></repo-main></div></div>
 <scroll-rail style="width:20px" gap="112" thumb="772" pad="8"></scroll-rail></div>`);

def('task-app',a=>`<style>:host{display:flex;width:61px;height:50px;justify-content:center;align-items:center;flex:none;position:relative;color:#fff}
 :host([hot]){background:#4e6067}
 i{position:absolute;bottom:0;height:3px;left:${a('hot')==='1'?0:5}px;right:${a('hot')==='1'?0:5}px;background:${a('multi')?'linear-gradient(90deg,#76b9ed 40px,#5a8fbd 40px)':'#76b9ed'}}</style>${I(a('icon'),a('w','30'),a('h',a('w','30')))}${a('run')?'<i></i>':''}`);

def('task-bar',()=>`<style>:host{display:flex;height:50px;background:linear-gradient(90deg,#20353e 0,#20353e 35%,#1c2c40 75%,#19263f 100%);color:#fff;align-items:center;font-size:15px;line-height:24px}
 .c{display:flex;flex-direction:column;align-items:center;margin:0 25px 0 22.500px}
 .b{width:19px;height:19px;background:#fff;color:#111;display:grid;place-items:center;font-size:15px;line-height:19px;margin-left:18px;margin-top:-2px;overflow:hidden}
 .n{position:relative}.n span{position:absolute;left:9px;top:10px;width:20px;height:20px;border-radius:50%;background:#33373e;border:1px solid #7a7f86;font-size:14px;line-height:18px;text-align:center}
 .e{width:1px;height:50px;background:#75808c;margin-left:25px;margin-right:5px}</style>
 <task-app icon="start" w="20" style="width:60px"></task-app><task-app icon="wsearch" w="20"></task-app><task-app icon="taskview" w="20"></task-app>
 <task-app icon="explorer" w="28" h="24" run="1" multi="1" style="width:62px;margin-left:1px"></task-app><task-app icon="edge" style="width:62px"></task-app>
 <task-app icon="chrome" hot="1" run="1"></task-app><task-app icon="firefox" w="28" style="width:63px"></task-app><task-app icon="vscode" run="1" style="width:61px"></task-app>
 <task-app icon="snip" w="28"></task-app><task-app icon="drop" w="24" h="30" style="width:64px"></task-app>
 <div style="flex:1"></div>
 ${I('news',30,20)}<div style="width:22px"></div>${I('tchev',16,9)}<div style="width:12px"></div>${I('net',20,17)}<div style="width:10px"></div>${I('vol',21,17)}
 <div style="margin-left:9px;font-size:17px;${MED}">${T(18,'英')}</div><div class="b">ㄅ</div>
 <div class="c"><span style="margin-top:-1px">${T(72,'下午 07:08')}</span><span style="margin-top:-1px">${T(83,'2023-11-09')}</span></div>
 <div class="n">${I('notif',20)}<span>1</span></div><div class="e"></div>`);

def('mark-frame',a=>`<style>:host{position:absolute;display:block;border:8px solid #ed1c24;left:${a('x')}px;top:${a('y')}px;width:${a('w')}px;height:${a('h')}px;box-sizing:border-box;z-index:5}</style>`);

def('ghost-menu',()=>`<style>:host{position:absolute;left:919px;top:396px;width:187px;height:24px;background:rgba(225,241,251,.4);color:#e9e6e6;font-size:15px;line-height:23px;padding-left:35px;box-sizing:border-box}</style>${T(92,'全螢幕剪取(S)')}`);

def('desk-shell',()=>`<style>:host{display:grid;grid-template:1030px 50px / 107px 1813px;width:1920px;height:1080px;position:relative;overflow:hidden;background:#000}
 .d{background:linear-gradient(180deg,#009df3 0,#00a6fa 30%,#00b0ff 60%,#00b2fc 100%);display:flex;flex-direction:column;width:107px;padding-right:13px;position:relative}
 .x{position:absolute;left:101px;width:6px;overflow:hidden;color:#fff;font-size:15px;line-height:19px;text-shadow:1px 1px 2px #000}
 browser-window{position:relative}task-bar{grid-column:1/3;position:relative;z-index:2}</style>
 <div class="d">
 <desk-icon icon="bin">${T(75,'資源回收筒')}</desk-icon>
 <desk-icon icon="dfolder">${T(84,'2023-02-1...')}</desk-icon>
 <desk-icon icon="pc">${T(30,'本機')}</desk-icon>
 <desk-icon icon="cpanel">${T(44,'控制台')}</desk-icon>
 <desk-icon icon="zip">${T(66,'7-Zip File')}${T(63,'Manager')}</desk-icon>
 <desk-icon icon="acrobat">${T(46,'Adobe')}${T(67,'Acrobat ...')}</desk-icon>
 <desk-icon icon="pspad">${T(90,'PSPad editor')}</desk-icon>
 <desk-icon icon="teams">${T(65,'Microsoft')}${T(46,'Teams')}</desk-icon>
 <span class="x" style="top:193px">C</span><span class="x" style="top:315px;left:103px;width:4px">V</span><span class="x" style="top:827px;left:100px;width:7px">1</span>
 </div>
 <browser-window></browser-window>
 <task-bar></task-bar>
 <ghost-menu></ghost-menu>
 <mark-frame x="266" y="52" w="752.500" h="59"></mark-frame>
 <mark-frame x="502" y="101" w="497" h="92"></mark-frame>
 <mark-frame x="115" y="370" w="312" h="637"></mark-frame>`);
</script>
</body>
</html>
